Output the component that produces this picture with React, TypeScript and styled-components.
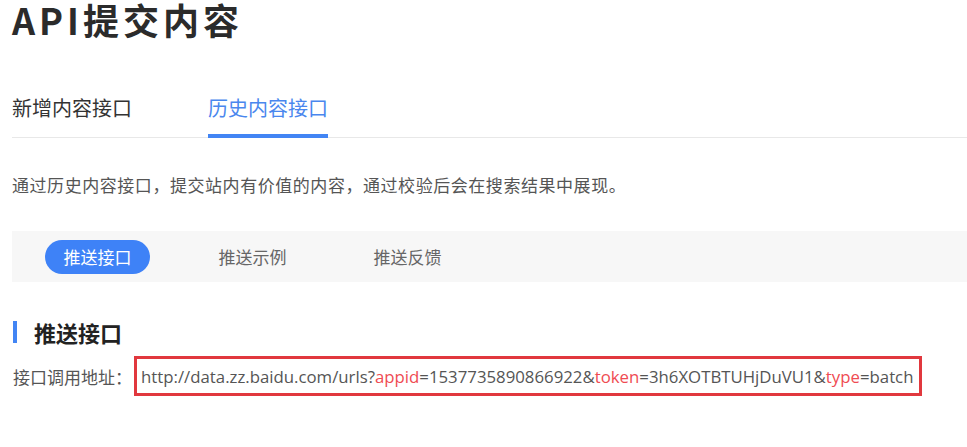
import React from 'react'
import styled, { createGlobalStyle } from 'styled-components'

const GlobalStyle = createGlobalStyle`
  html, body {
    margin: 0;
    padding: 0;
    background: #fff;
  }
  body {
    font-family: "Noto Sans CJK SC", "Noto Sans", sans-serif;
    color: #333;
  }
`

const Page = styled.div`
  width: 967px;
  height: 447px;
  overflow: hidden;
  padding-left: 12px;
  box-sizing: border-box;
`

const Title = styled.h1`
  margin: 0;
  font-size: 36px;
  line-height: 38px;
  font-weight: 700;
  letter-spacing: 4px;
  color: #2b2b2b;
`

const TabBar = styled.div`
  display: flex;
  gap: 76px;
  margin-top: 56px;
  border-bottom: 1px solid #e8e8e8;
`

const Tab = styled.div<{ active?: boolean }>`
  font-size: 20px;
  line-height: 28px;
  padding-bottom: 12px;
  color: ${({ active }) => (active ? '#4a87ee' : '#333')};
  border-bottom: 4px solid ${({ active }) => (active ? '#4285f4' : 'transparent')};
  margin-bottom: -1px;
`

const Intro = styled.p`
  margin: 35px 0 0;
  font-size: 17px;
  line-height: 24px;
  letter-spacing: 0.55px;
  color: #555;
`

const SubNav = styled.div`
  display: flex;
  align-items: center;
  gap: 50px;
  height: 51px;
  margin-top: 34px;
  padding-left: 33px;
  background: #f7f7f7;
`

const SubNavItem = styled.div<{ active?: boolean }>`
  width: 105px;
  height: 34px;
  border-radius: 17px;
  display: flex;
  align-items: center;
  justify-content: center;
  font-size: 17px;
  color: ${({ active }) => (active ? '#fff' : '#666')};
  background: ${({ active }) => (active ? '#3e82f7' : 'transparent')};
`

const SectionTitle = styled.h2`
  margin: 39px 0 0 1px;
  padding-left: 17px;
  border-left: 4px solid #4285f4;
  font-size: 22px;
  line-height: 22px;
  font-weight: 700;
  color: #222;
`

const AddressRow = styled.div`
  display: flex;
  align-items: center;
  margin-top: 13px;
  font-size: 17px;
  color: #555;
`

const Label = styled.span`
  margin-left: 1px;
  margin-right: 2px;
`

const UrlBox = styled.div`
  border: 3px solid #e1383e;
  padding: 0 6px 0 4px;
  height: 34px;
  display: flex;
  align-items: center;
  font-family: "Open Sans", "Noto Sans", sans-serif;
  font-size: 16.8px;
  color: #555;
  white-space: nowrap;
`

const Key = styled.span`
  color: #ef4b52;
`

const params: [string, string][] = [
  ['appid', '1537735890866922'],
  ['token', '3h6XOTBTUHjDuVU1'],
  ['type', 'batch'],
]

export default function App() {
  return (
    <>
      <GlobalStyle />
      <Page>
        <Title>API提交内容</Title>
        <TabBar>
          <Tab>新增内容接口</Tab>
          <Tab active>历史内容接口</Tab>
        </TabBar>
        <Intro>通过历史内容接口，提交站内有价值的内容，通过校验后会在搜索结果中展现。</Intro>
        <SubNav>
          <SubNavItem active>推送接口</SubNavItem>
          <SubNavItem>推送示例</SubNavItem>
          <SubNavItem>推送反馈</SubNavItem>
        </SubNav>
        <SectionTitle>推送接口</SectionTitle>
        <AddressRow>
          <Label>接口调用地址：</Label>
          <UrlBox>
            http://data.zz.baidu.com/urls?
            {params.map(([k, v], i) => (
              <React.Fragment key={k}>
                {i > 0 && '&'}
                <Key>{k}</Key>={v}
              </React.Fragment>
            ))}
          </UrlBox>
        </AddressRow>
      </Page>
    </>
  )
}
